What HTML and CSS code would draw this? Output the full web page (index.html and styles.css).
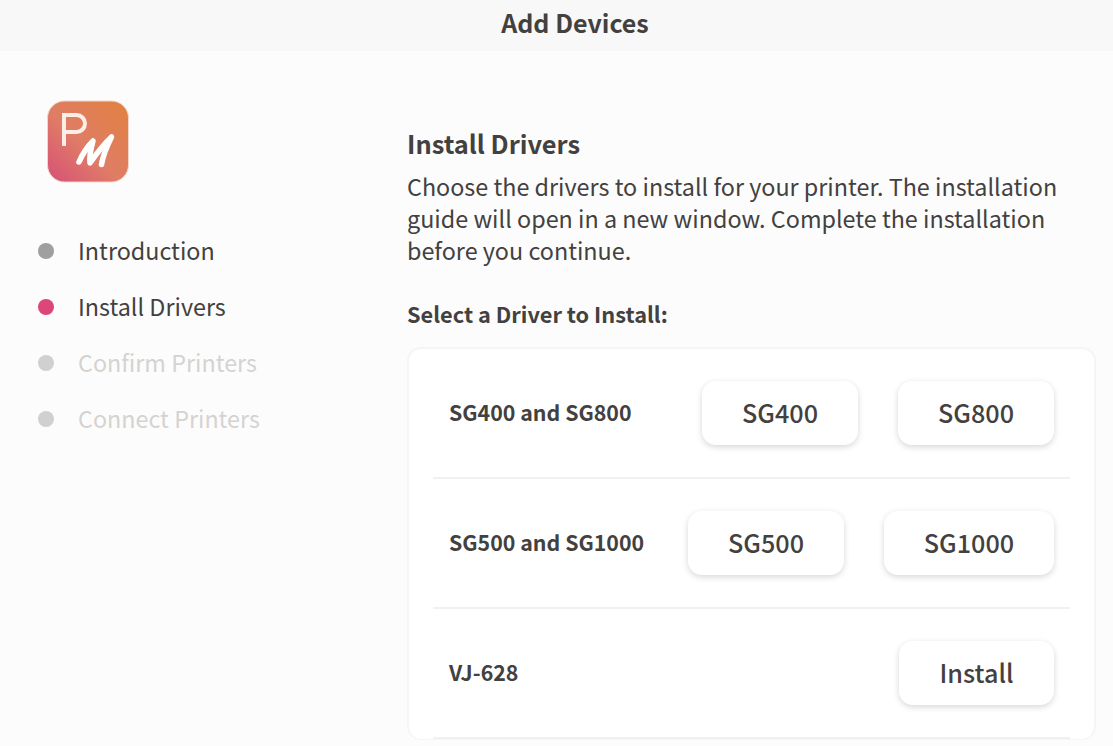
FILE: index.html
```html
<!DOCTYPE html>
<html lang="en">
<head>
<meta charset="utf-8">
<title>Add Devices</title>
<link rel="stylesheet" href="styles.css">
</head>
<body>
<header class="titlebar">Add Devices</header>
<div class="layout">
  <aside class="sidebar">
    <svg class="logo" viewBox="0 0 84 84" width="84" height="84" aria-hidden="true">
      <defs>
        <linearGradient id="lg" x1="1" y1="0" x2="0" y2="1">
          <stop offset="0" stop-color="#e2813f"/>
          <stop offset="0.55" stop-color="#df7d66"/>
          <stop offset="1" stop-color="#d74f78"/>
        </linearGradient>
      </defs>
      <rect x="1.500" y="1" width="81" height="81" rx="17" fill="url(#lg)" stroke="#f1d5ca" stroke-width="1"/>
      <path d="M18 46V15h12.500a8.500 8.500 0 0 1 0 17H18" fill="none" stroke="#fbeee9" stroke-width="4"/>
      <path d="M33 62C37 53 41 47 47 41C45 48 43 55 44 63C51 53 58 44 65.500 37C61 46 57 55 55.500 64.500" fill="none" stroke="#fff" stroke-width="5.500" stroke-linecap="round" stroke-linejoin="round"/>
    </svg>
    <ol class="steps">
      <li class="step step-done"><span class="dot"></span><span class="step-label">Introduction</span></li>
      <li class="step step-active"><span class="dot"></span><span class="step-label">Install Drivers</span></li>
      <li class="step step-todo"><span class="dot"></span><span class="step-label">Confirm Printers</span></li>
      <li class="step step-todo"><span class="dot"></span><span class="step-label">Connect Printers</span></li>
    </ol>
  </aside>
  <main class="content">
    <h1 class="heading">Install Drivers</h1>
    <p class="intro">Choose the drivers to install for your printer. The installation guide will open in a new window. Complete the installation before you continue.</p>
    <h2 class="subheading">Select a Driver to Install:</h2>
    <section class="card">
      <div class="row">
        <span class="row-label">SG400 and SG800</span>
        <div class="row-buttons"><button class="btn">SG400</button><button class="btn">SG800</button></div>
      </div>
      <div class="row">
        <span class="row-label">SG500 and SG1000</span>
        <div class="row-buttons"><button class="btn">SG500</button><button class="btn btn-wide">SG1000</button></div>
      </div>
      <div class="row">
        <span class="row-label">VJ-628</span>
        <div class="row-buttons"><button class="btn btn-narrow">Install</button></div>
      </div>
    </section>
  </main>
</div>
</body>
</html>
```
FILE: styles.css
```css
* { box-sizing: border-box; }
html, body { margin: 0; height: 100%; overflow: hidden; }
body {
  background: #fcfcfc;
  color: #434140;
  font-family: "Noto Sans CJK SC", "Noto Sans", sans-serif;
  font-size: 23.35px;
}
.titlebar {
  height: 51px;
  background: #f8f8f8;
  display: flex;
  align-items: center;
  justify-content: center;
  padding: 0 0 8px 37px;
  font-size: 25px;
  font-weight: 700;
}
.layout { display: flex; }
.sidebar { width: 407px; padding: 49px 0 0 38px; flex: none; }
.logo { display: block; margin-left: 8px; }
.steps { list-style: none; margin: 39px 0 0; padding: 0; display: flex; flex-direction: column; }
.step { height: 56px; display: flex; align-items: center; gap: 24px; }
.step-label { padding-bottom: 2px; }
.dot { width: 16px; height: 16px; border-radius: 50%; background: #9f9f9f; flex: none; }
.step-active .dot { background: #dc4679; }
.step-todo { color: #d5d3d1; }
.step-todo .dot { background: #d0d0d0; }
.content { width: 689px; padding-top: 74px; }
.heading { margin: 0; font-size: 25.4px; line-height: 36px; font-weight: 700; }
.intro { margin: 9px 0 0; line-height: 32px; width: 680px; }
.subheading { margin: 32px 0 0; font-size: 21.75px; line-height: 32px; font-weight: 700; }
.card {
  margin-top: 17px;
  height: 393px;
  background: #fff;
  border: 2px solid #f5f5f5;
  border-bottom-width: 1px;
  border-radius: 14px;
  padding: 0 24px;
}
.row {
  height: 130px;
  display: flex;
  align-items: center;
  justify-content: space-between;
  padding: 0 16px;
  border-bottom: 2px solid #f1f1f1;
}
.row-label { font-size: 21.35px; font-weight: 700; padding-bottom: 4px; }
.row-buttons { display: flex; gap: 40px; }
.btn {
  width: 156px;
  height: 64px;
  border: 0;
  border-radius: 14px;
  background: #fff;
  color: #434140;
  font: inherit;
  font-size: 25.2px;
  font-weight: 500;
  box-shadow: 0 2px 6px rgba(0, 0, 0, 0.16);
  padding: 0 0 2px;
}
.btn-wide { width: 170px; }
.btn-narrow { width: 155px; }
```
